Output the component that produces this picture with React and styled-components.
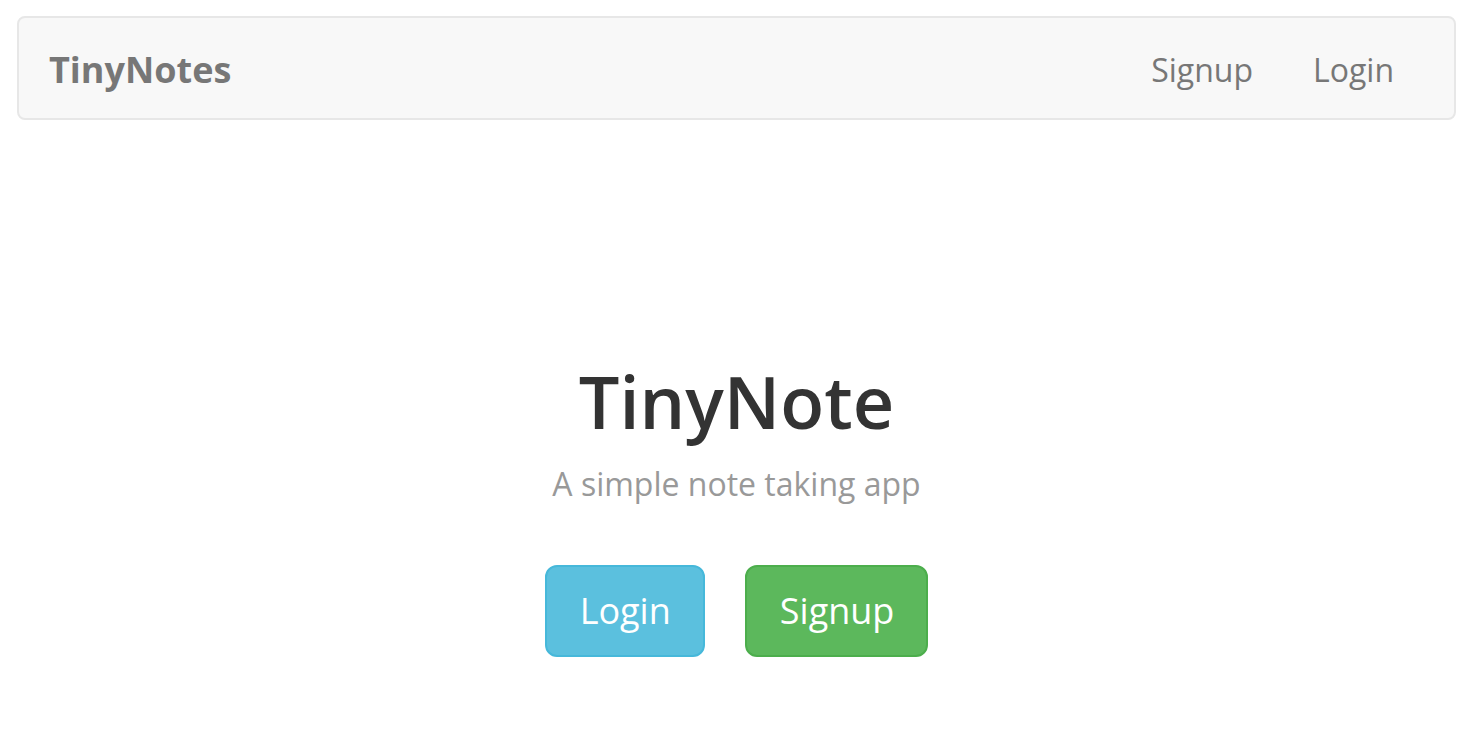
import React from 'react';
import styled, { createGlobalStyle } from 'styled-components';

const GlobalStyle = createGlobalStyle`
  html, body {
    margin: 0;
    padding: 0;
    background: #fff;
    font-family: "Open Sans", "Liberation Sans", sans-serif;
  }
`;

const Page = styled.div`
  margin: 16px 28px 0 17px;
`;

const Navbar = styled.nav`
  display: flex;
  align-items: center;
  justify-content: space-between;
  box-sizing: content-box;
  height: 97px;
  padding: 3px 30px 0;
  background-color: #f8f8f8;
  border: 2px solid #e7e7e7;
  border-radius: 8px;
`;

const Brand = styled.a`
  font-size: 36px;
  line-height: 1;
  font-weight: 700;
  color: #777;
  text-decoration: none;
`;

const NavList = styled.ul`
  display: flex;
  margin: 0;
  padding: 0;
  list-style: none;
`;

const NavLink = styled.a`
  display: block;
  padding: 0 30px;
  font-size: 32px;
  line-height: 1;
  color: #777;
  text-decoration: none;
`;

const Hero = styled.section`
  display: flex;
  flex-direction: column;
  align-items: center;
  padding-top: 245px;
`;

const Title = styled.h1`
  margin: 0;
  font-size: 72px;
  line-height: 1;
  font-weight: 600;
  color: #333;
`;

const Subtitle = styled.p`
  margin: 31px 0 0;
  font-size: 32px;
  line-height: 1;
  color: #999;
`;

const Actions = styled.div`
  display: flex;
  gap: 40px;
  margin-top: 65px;
`;

const Button = styled.button`
  height: 92px;
  padding: 0 32px 0 33px;
  font-family: inherit;
  font-size: 36px;
  line-height: 1;
  color: #fff;
  background-color: ${(p) => (p.variant === 'success' ? '#5cb85c' : '#5bc0de')};
  border: 2px solid ${(p) => (p.variant === 'success' ? '#4cae4c' : '#46b8da')};
  border-radius: 12px;
  cursor: pointer;
`;

const App = () => {
  return (
    <>
      <GlobalStyle />
      <Page>
        <Navbar>
          <Brand href="#">TinyNotes</Brand>
          <NavList>
            <li><NavLink href="#">Signup</NavLink></li>
            <li><NavLink href="#">Login</NavLink></li>
          </NavList>
        </Navbar>
        <Hero>
          <Title>TinyNote</Title>
          <Subtitle>A simple note taking app</Subtitle>
          <Actions>
            <Button variant="info">Login</Button>
            <Button variant="success">Signup</Button>
          </Actions>
        </Hero>
      </Page>
    </>
  );
};

export default App;
